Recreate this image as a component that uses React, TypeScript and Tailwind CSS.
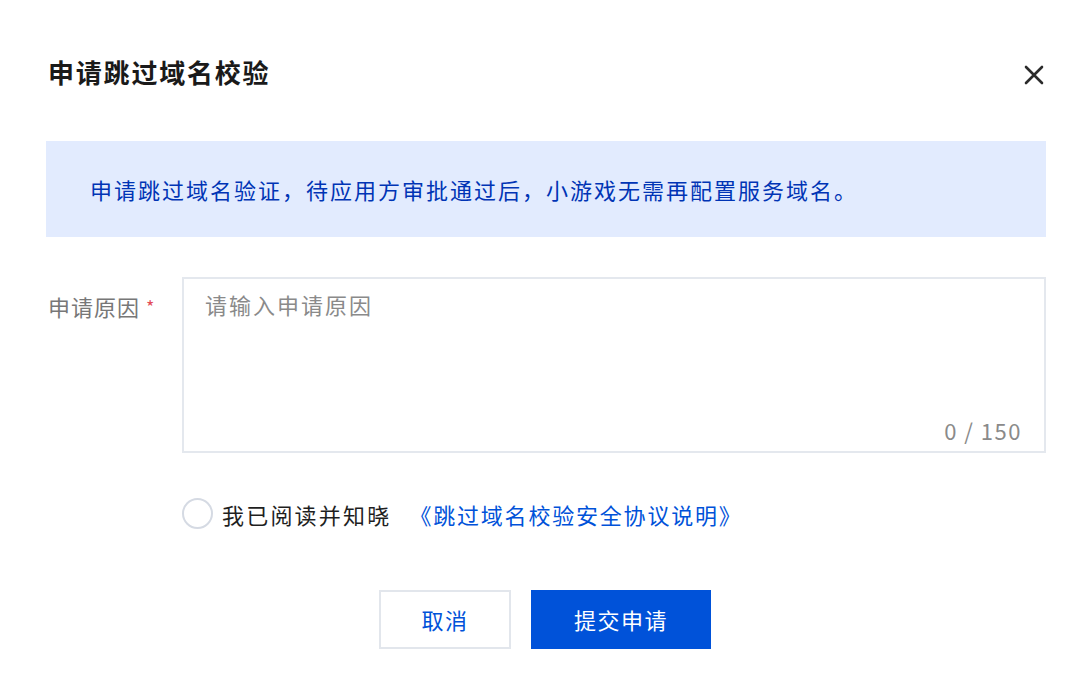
export default function App() {
  return (
    <div
      className="flex h-[696px] w-[1090px] flex-col bg-white"
      style={{ fontFamily: '"Noto Sans CJK SC", "Noto Sans", sans-serif' }}
    >
      <div className="flex items-center justify-between pl-[48px] pr-[44px] pt-[52px]">
        <h1 className="text-[26px] font-bold leading-[40px] tracking-[1.8px] text-[#1a1a1a]">
          申请跳过域名校验
        </h1>
        <button type="button" className="mt-[6px] flex h-[24px] w-[24px] items-center justify-center">
          <svg width="20" height="20" viewBox="0 0 20 20" fill="none">
            <path d="M2 2L18 18M18 2L2 18" stroke="#2b2b2b" strokeWidth="2.6" strokeLinecap="round" />
          </svg>
        </button>
      </div>

      <div className="ml-[46px] mr-[44px] mt-[49px] flex h-[96px] items-center bg-[#e2ebfe] pl-[44px]">
        <p className="text-[22px] tracking-[2px] text-[#0034b5]">
          申请跳过域名验证，待应用方审批通过后，小游戏无需再配置服务域名。
        </p>
      </div>

      <div className="mt-[40px] flex pl-[48px] pr-[44px]">
        <div className="flex w-[134px] pt-[14px] text-[22px] leading-[30px] tracking-[1px] text-[#777]">
          申请原因
          <span className="ml-[6px] text-[18px] text-[#e34d59]">*</span>
        </div>
        <div className="relative h-[176px] flex-1 border-2 border-[#e4e8ee]">
          <div className="pl-[21px] pt-[10px] text-[22px] leading-[30px] tracking-[2px] text-[#8a8a8a]">
            请输入申请原因
          </div>
          <div className="absolute bottom-[6px] right-[22px] text-[22px] leading-[30px] tracking-[1.5px] text-[#8a8a8a]">
            0 / 150
          </div>
        </div>
      </div>

      <div className="mt-[45px] flex items-center pl-[182px]">
        <span className="h-[31px] w-[31px] rounded-full border-2 border-[#d5dae3]" />
        <span className="ml-[9px] text-[22px] leading-[30px] tracking-[2.2px] text-[#1f1f1f]">
          我已阅读并知晓
        </span>
        <span className="ml-[18px] text-[22px] leading-[30px] tracking-[1.8px] text-[#0052d9]">
          《跳过域名校验安全协议说明》
        </span>
      </div>

      <div className="mt-[61px] flex justify-center gap-[20px]">
        <button
          type="button"
          className="h-[59px] w-[132px] border-2 border-[#e2e6ec] bg-white text-[22px] tracking-[1.5px] text-[#0052d9]"
        >
          取消
        </button>
        <button
          type="button"
          className="h-[59px] w-[180px] bg-[#0052d9] text-[22px] tracking-[1.5px] text-white"
        >
          提交申请
        </button>
      </div>
    </div>
  );
}
